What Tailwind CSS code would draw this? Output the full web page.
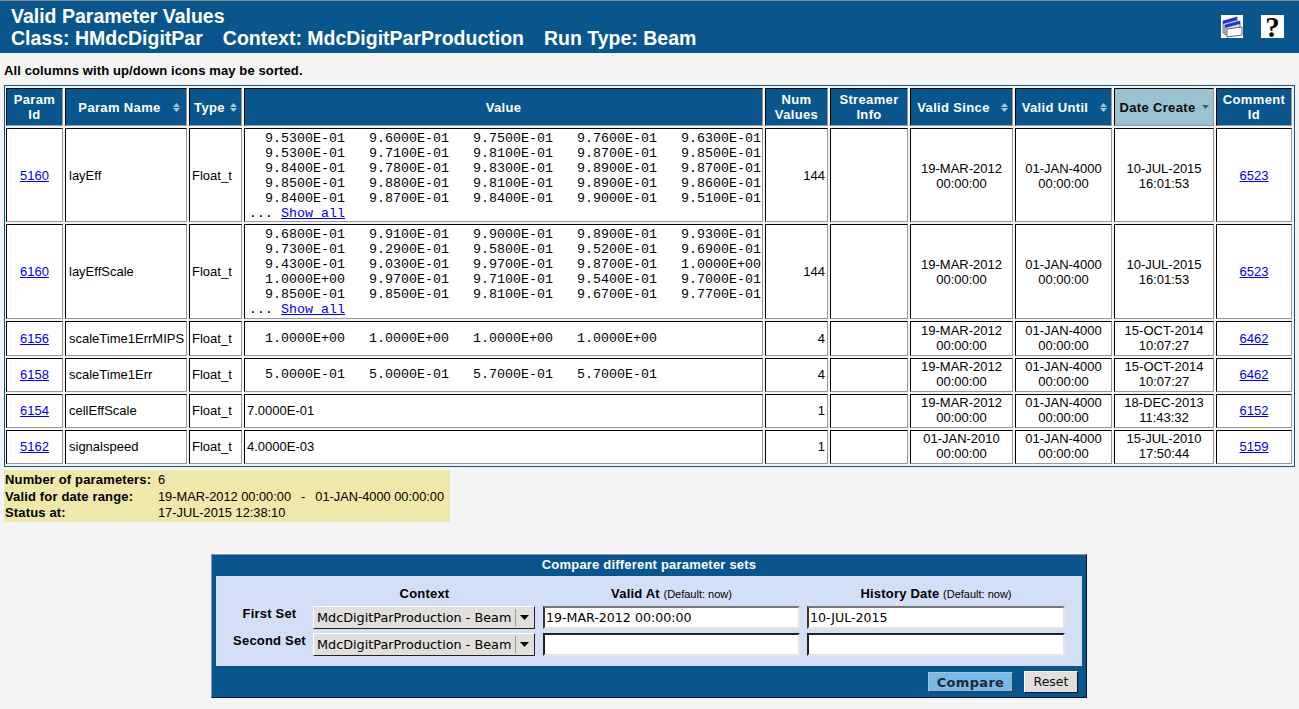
<!DOCTYPE html>
<html>
<head>
<meta charset="utf-8">
<title>Valid Parameter Values</title>
<script src="https://cdn.jsdelivr.net/npm/@tailwindcss/browser@4"></script>
</head>
<body class="bg-[#f4f4f4] font-['Liberation_Sans',sans-serif] text-black text-[13px] overflow-hidden">

<!-- Page header -->
<header class="h-[53px] bg-[#09568f] border-t border-[#8c8c8c] flex justify-between text-white font-bold text-[19.5px] leading-[22px] pl-[11px] pt-[4px]">
  <div>
    <div>Valid Parameter Values</div>
    <div class="flex gap-[20px]"><span>Class: HMdcDigitPar</span><span>Context: MdcDigitParProduction</span><span>Run Type: Beam</span></div>
  </div>
  <div class="flex gap-[18px] pr-[15px] pt-[10px]">
    <svg width="22" height="23" viewBox="0 0 22 23" class="bg-white">
      <path d="M2 6 16 2v12L2 18z" fill="#ccc" stroke="#777"/>
      <path d="M2 6 16 2v3L2 9z" fill="#1c30e8"/>
      <path d="M4 10 19 6v10L4 20z" fill="#ddd" stroke="#777"/>
      <path d="M4 10 19 6v3L4 13z" fill="#1c30e8"/>
      <path d="M6 14 21 12v8L6 22z" fill="#fff" stroke="#666"/>
    </svg>
    <div class="w-[23px] h-[23px] bg-white text-black text-center font-['Liberation_Serif',serif] font-bold text-[29px] leading-[25px]">?</div>
  </div>
</header>

<p class="font-bold tracking-[0.12px] leading-[14px] pl-[4px] pt-[11px] h-[32px]">All columns with up/down icons may be sorted.</p>

<!-- Parameter table -->
<div class="ml-[4px] w-[1291px] border border-[#09568f]">
  <table class="table-fixed border-separate border-spacing-[2px] w-[1290px] -ml-[1px]">
    <colgroup>
      <col class="w-[57px]"><col class="w-[122px]"><col class="w-[53px]"><col class="w-[519px]"><col class="w-[63px]"><col class="w-[78px]"><col class="w-[103px]"><col class="w-[97px]"><col class="w-[100px]"><col class="w-[76px]">
    </colgroup>
    <thead>
      <tr class="h-[38px] text-white font-bold tracking-[0.35px] leading-[15px]">
        <th class="bg-[#09568f] border border-black border-r-[#999] border-b-[#999]">Param<br>Id</th>
        <th class="bg-[#09568f] border border-black border-r-[#999] border-b-[#999]"><div class="flex items-center justify-center gap-[12px] pl-[6px]">Param Name <svg width="7" height="9" viewBox="0 0 7 9"><path d="M3.5 0 7 4H0z M0 5h7L3.5 9z" fill="#a4c6d6"/></svg></div></th>
        <th class="bg-[#09568f] border border-black border-r-[#999] border-b-[#999]"><div class="flex items-center justify-center gap-[5px]">Type <svg width="7" height="9" viewBox="0 0 7 9"><path d="M3.5 0 7 4H0z M0 5h7L3.5 9z" fill="#a4c6d6"/></svg></div></th>
        <th class="bg-[#09568f] border border-black border-r-[#999] border-b-[#999]">Value</th>
        <th class="bg-[#09568f] border border-black border-r-[#999] border-b-[#999]">Num<br>Values</th>
        <th class="bg-[#09568f] border border-black border-r-[#999] border-b-[#999]">Streamer<br>Info</th>
        <th class="bg-[#09568f] border border-black border-r-[#999] border-b-[#999]"><div class="flex items-center justify-center gap-[11px] pl-[2px]">Valid Since <svg width="7" height="9" viewBox="0 0 7 9"><path d="M3.5 0 7 4H0z M0 5h7L3.5 9z" fill="#a4c6d6"/></svg></div></th>
        <th class="bg-[#09568f] border border-black border-r-[#999] border-b-[#999]"><div class="flex items-center justify-center gap-[12px] pl-[2px]">Valid Until <svg width="7" height="9" viewBox="0 0 7 9"><path d="M3.5 0 7 4H0z M0 5h7L3.5 9z" fill="#a4c6d6"/></svg></div></th>
        <th class="bg-[#9ac3d2] text-[#0a0a0a] border border-black border-r-[#999] border-b-[#999]"><div class="flex items-center justify-center gap-[6px]">Date Create <svg width="7" height="4" viewBox="0 0 7 4"><path d="M0 0h7L3.5 4z" fill="#4a5a66"/></svg></div></th>
        <th class="bg-[#09568f] border border-black border-r-[#999] border-b-[#999]">Comment<br>Id</th>
      </tr>
    </thead>
    <tbody id="rows" class="bg-white leading-[15px]"></tbody>
  </table>
</div>

<!-- Summary box -->
<div class="ml-[4px] mt-[3px] w-[446px] h-[52px] bg-[#eee8aa] pl-[1px] pt-[2px] grid grid-cols-[153px_1fr] leading-[16.5px] content-start text-[12.8px]">
  <b class="text-[13px] tracking-[0.15px]">Number of parameters:</b><span>6</span>
  <b class="text-[13px] tracking-[0.15px]">Valid for date range:</b><span class="flex gap-[10px]"><span>19-MAR-2012 00:00:00</span><span>-</span><span>01-JAN-4000 00:00:00</span></span>
  <b class="text-[13px] tracking-[0.15px]">Status at:</b><span>17-JUL-2015 12:38:10</span>
</div>

<!-- Compare form -->
<form class="ml-[211px] mt-[32px] w-[876px] h-[144px] bg-[#09568f] border border-[#8f8fb8] border-b-[#001040] border-r-[#001040] px-[4px]">
  <div class="h-[21px] text-center text-white font-bold tracking-[0.2px] leading-[20px]">Compare different parameter sets</div>
  <div class="h-[90px] bg-[#d2dff7] pl-[17px] pt-[10px]">
    <div class="grid grid-cols-[73px_223px_257px_258px] gap-x-[7px] grid-rows-[20px_27px_27px] items-start font-bold">
      <div></div>
      <div class="text-center tracking-[0.2px] leading-[15px]">Context</div>
      <div class="text-center leading-[15px]"><span class="tracking-[0.2px]">Valid At</span> <span class="font-normal text-[11px]">(Default: now)</span></div>
      <div class="text-center leading-[15px]"><span class="tracking-[0.2px]">History Date</span> <span class="font-normal text-[11px]">(Default: now)</span></div>

      <div class="text-center tracking-[0.2px] leading-[15px] whitespace-nowrap">First Set</div>
      <div class="relative w-[222px] h-[23px]">
        <select class="appearance-none w-full h-full bg-[#e0dfdc] border border-white border-r-[#222] border-b-[#222] rounded-none pl-[3px] font-['DejaVu_Sans',sans-serif] font-normal text-[12.8px] text-black"><option>MdcDigitParProduction - Beam</option></select>
        <svg class="absolute right-[6px] top-[9px]" width="9" height="5" viewBox="0 0 9 5"><path d="M0 0h9L4.5 5z" fill="#000"/></svg>
        <div class="absolute right-[19px] top-[3px] w-[1px] h-[17px] bg-[#999]"></div>
      </div>
      <input type="text" value="19-MAR-2012 00:00:00" class="w-[257px] h-[23px] bg-white border-2 border-[#e4e4e0] border-t-[#777] border-l-[#333] pl-[1px] font-['DejaVu_Sans',sans-serif] font-normal text-[12.6px]">
      <input type="text" value="10-JUL-2015" class="w-[258px] h-[23px] bg-white border-2 border-[#e4e4e0] border-t-[#777] border-l-[#333] pl-[1px] font-['DejaVu_Sans',sans-serif] font-normal text-[12.6px]">

      <div class="text-center tracking-[0.2px] leading-[15px] whitespace-nowrap">Second Set</div>
      <div class="relative w-[222px] h-[23px]">
        <select class="appearance-none w-full h-full bg-[#e0dfdc] border border-white border-r-[#222] border-b-[#222] rounded-none pl-[3px] font-['DejaVu_Sans',sans-serif] font-normal text-[12.8px] text-black"><option>MdcDigitParProduction - Beam</option></select>
        <svg class="absolute right-[6px] top-[9px]" width="9" height="5" viewBox="0 0 9 5"><path d="M0 0h9L4.5 5z" fill="#000"/></svg>
        <div class="absolute right-[19px] top-[3px] w-[1px] h-[17px] bg-[#999]"></div>
      </div>
      <input type="text" class="w-[257px] h-[23px] bg-white border-2 border-[#e4e4e0] border-t-[#222] border-l-[#222]">
      <input type="text" class="w-[258px] h-[23px] bg-white border-2 border-[#e4e4e0] border-t-[#222] border-l-[#222]">
    </div>
  </div>
  <div class="flex justify-end items-center gap-[11px] pr-[4px] pt-[5px]">
    <button type="button" class="w-[85px] h-[20px] bg-[#7ab8e8] border border-[#a0c4e0] border-r-[#345] border-b-[#345] font-['DejaVu_Sans',sans-serif] font-bold text-[13px] tracking-[0.3px] text-[#1a2a38]">Compare</button>
    <button type="button" class="w-[54px] h-[22px] bg-[#e0dfdc] border border-white border-r-[#111] border-b-[#111] font-['DejaVu_Sans',sans-serif] text-[12.5px] text-[#111]">Reset</button>
  </div>
</form>

<script>
const td = "border border-black border-r-[#999] border-b-[#999]";
const link = "text-[#0000ee] underline";
const mono = "font-['Liberation_Mono',monospace] text-[13.33px] leading-[15px] pl-[2px]";

const block = lines => lines.map(l => "  " + l.join("   ")).join("\n");
const showAll = `\n... <a href="#" class="${link}">Show all</a>`;

const rows = [
  { h: "h-[94px]", pad: "pt-[1px]", id: 5160, name: "layEff", n: 144, since: "19-MAR-2012", sinceT: "00:00:00", until: "01-JAN-4000", create: "10-JUL-2015", createT: "16:01:53", comment: 6523,
    pre: block([
      ["9.5300E-01","9.6000E-01","9.7500E-01","9.7600E-01","9.6300E-01"],
      ["9.5300E-01","9.7100E-01","9.8100E-01","9.8700E-01","9.8500E-01"],
      ["9.8400E-01","9.7800E-01","9.8300E-01","9.8900E-01","9.8700E-01"],
      ["9.8500E-01","9.8800E-01","9.8100E-01","9.8900E-01","9.8600E-01"],
      ["9.8400E-01","9.8700E-01","9.8400E-01","9.9000E-01","9.5100E-01"]]) + showAll },
  { h: "h-[95px]", pad: "", id: 6160, name: "layEffScale", n: 144, since: "19-MAR-2012", sinceT: "00:00:00", until: "01-JAN-4000", create: "10-JUL-2015", createT: "16:01:53", comment: 6523,
    pre: block([
      ["9.6800E-01","9.9100E-01","9.9000E-01","9.8900E-01","9.9300E-01"],
      ["9.7300E-01","9.2900E-01","9.5800E-01","9.5200E-01","9.6900E-01"],
      ["9.4300E-01","9.0300E-01","9.9700E-01","9.8700E-01","1.0000E+00"],
      ["1.0000E+00","9.9700E-01","9.7100E-01","9.5400E-01","9.7000E-01"],
      ["9.8500E-01","9.8500E-01","9.8100E-01","9.6700E-01","9.7700E-01"]]) + showAll },
  { h: "h-[35px]", pad: "pb-[1px]", id: 6156, name: "scaleTime1ErrMIPS", n: 4, since: "19-MAR-2012", sinceT: "00:00:00", until: "01-JAN-4000", create: "15-OCT-2014", createT: "10:07:27", comment: 6462,
    pre: block([["1.0000E+00","1.0000E+00","1.0000E+00","1.0000E+00"]]) },
  { h: "h-[34px]", pad: "pb-[2px]", id: 6158, name: "scaleTime1Err", n: 4, since: "19-MAR-2012", sinceT: "00:00:00", until: "01-JAN-4000", create: "15-OCT-2014", createT: "10:07:27", comment: 6462,
    pre: block([["5.0000E-01","5.0000E-01","5.7000E-01","5.7000E-01"]]) },
  { h: "h-[34px]", pad: "pb-[2px]", id: 6154, name: "cellEffScale", n: 1, since: "19-MAR-2012", sinceT: "00:00:00", until: "01-JAN-4000", create: "18-DEC-2013", createT: "11:43:32", comment: 6152, value: "7.0000E-01" },
  { h: "h-[34px]", pad: "pb-[2px]", id: 5162, name: "signalspeed", n: 1, since: "01-JAN-2010", sinceT: "00:00:00", until: "01-JAN-4000", create: "15-JUL-2010", createT: "17:50:44", comment: 5159, value: "4.0000E-03" },
];

document.getElementById("rows").innerHTML = rows.map(r => `
  <tr class="${r.h}">
    <td class="${td} ${r.pad} text-center"><a href="#" class="${link}">${r.id}</a></td>
    <td class="${td} ${r.pad} pl-[3px]">${r.name}</td>
    <td class="${td} ${r.pad} pl-[2px]">Float_t</td>
    <td class="${td} ${r.pad} pl-[2px]">${r.pre ? `<pre class="${mono}">${r.pre}</pre>` : r.value}</td>
    <td class="${td} ${r.pad} text-right pr-[2px]">${r.n}</td>
    <td class="${td}"></td>
    <td class="${td} ${r.pad} text-center">${r.since}<br>${r.sinceT}</td>
    <td class="${td} ${r.pad} text-center">${r.until}<br>00:00:00</td>
    <td class="${td} ${r.pad} text-center">${r.create}<br>${r.createT}</td>
    <td class="${td} ${r.pad} text-center"><a href="#" class="${link}">${r.comment}</a></td>
  </tr>`).join("");
</script>
</body>
</html>
